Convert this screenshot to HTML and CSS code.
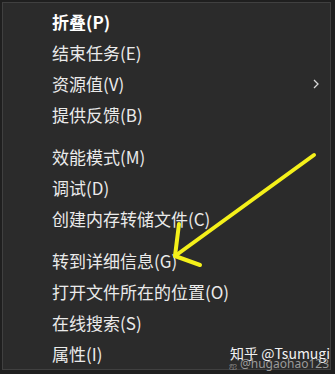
FILE: index.html
```html
<!DOCTYPE html>
<html lang="zh-CN">
<head>
<meta charset="utf-8">
<link rel="stylesheet" href="styles.css">
</head>
<body>
<div class="menu">
  <div class="item bold">折叠(P)</div>
  <div class="item">结束任务(E)</div>
  <div class="item sub">资源值(V)
    <svg class="chev" width="8" height="12" viewBox="0 0 8 12"><path d="M2 2 L6 6 L2 10" fill="none" stroke="#d8d8d8" stroke-width="1.3"/></svg>
  </div>
  <div class="item">提供反馈(B)</div>
  <div class="sep"></div>
  <div class="item">效能模式(M)</div>
  <div class="item">调试(D)</div>
  <div class="item">创建内存转储文件(C)</div>
  <div class="sep"></div>
  <div class="item">转到详细信息(G)</div>
  <div class="item">打开文件所在的位置(O)</div>
  <div class="item">在线搜索(S)</div>
  <div class="item">属性(I)</div>
</div>
<svg class="arrow" width="335" height="374" viewBox="0 0 335 374">
  <g fill="none" stroke="#f4f01a" stroke-width="4" stroke-linecap="round" stroke-linejoin="round">
    <path d="M314 155 L175 256"/>
    <path d="M179 224 L175 256 L200 265"/>
  </g>
</svg>
<div class="wm">
  <div class="wm1">知乎 @Tsumugi</div>
  <div class="wm2"><span class="logo">ஐ</span>@hugaohao123</div>
</div>
</body>
</html>
```
FILE: styles.css
```css
html, body {
  margin: 0;
  padding: 0;
}
body {
  width: 335px;
  height: 374px;
  background: #1f1f1f;
  overflow: hidden;
  font-family: "Noto Sans CJK SC", "Noto Sans", sans-serif;
  position: relative;
}
.menu {
  margin: 2px 0 0 2px;
  width: 329px;
  height: 368px;
  box-sizing: border-box;
  background: #2b2b2b;
  border: 1px solid #404040;
  padding: 3px 0 0 0;
  display: flex;
  flex-direction: column;
}
.item {
  height: 31px;
  line-height: 31px;
  padding-left: 49px;
  color: #eaeaea;
  font-size: 17px;
  display: flex;
  align-items: center;
  position: relative;
}
.bold {
  font-weight: 700;
  color: #ffffff;
}
.chev {
  position: absolute;
  left: 309px;
  top: 10px;
}
.sep {
  height: 1px;
  background: #3e3e3e;
  margin: 5px 3px 6px 4px;
}
.arrow {
  position: absolute;
  left: 0;
  top: 0;
}
.wm {
  position: absolute;
  left: 229px;
  top: 345px;
  width: 104px;
  height: 28px;
}
.wm1 {
  position: absolute;
  left: 1px;
  top: 0;
  font-size: 14px;
  line-height: 16px;
  color: #f2f2f2;
  white-space: nowrap;
}
.wm2 {
  position: absolute;
  left: 0;
  top: 11px;
  font-size: 12px;
  line-height: 15px;
  color: #9a9a9a;
  white-space: nowrap;
  font-family: "Noto Sans", sans-serif;
}
.logo {
  font-size: 10px;
  margin-right: 3px;
}
```
